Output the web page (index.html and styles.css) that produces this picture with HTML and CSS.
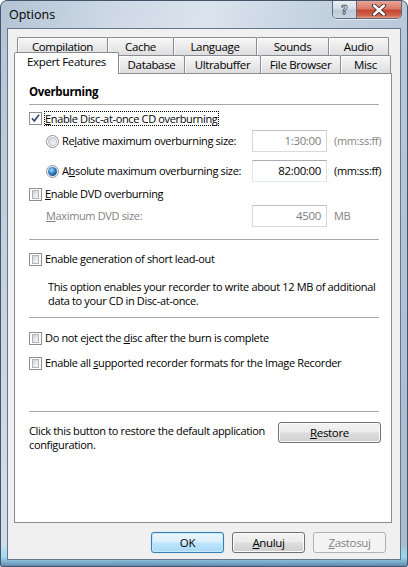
FILE: index.html
```html
<!DOCTYPE html>
<html>
<head>
<meta charset="utf-8">
<title>Options</title>
<link rel="stylesheet" href="styles.css">
</head>
<body>
<div class="window">
  <div class="titlebar">
    <span class="title">Options</span>
    <div class="caption-btns">
      <div class="cbtn help"><span class="qmark">?</span></div>
      <div class="cbtn close">
        <svg width="16" height="12" viewBox="0 0 16 12"><path d="M3 1.5 L13 10.5 M13 1.5 L3 10.5" stroke="#3b2a28" stroke-width="4.2" stroke-linecap="round"/><path d="M3 1.5 L13 10.5 M13 1.5 L3 10.5" stroke="#ffffff" stroke-width="2.4" stroke-linecap="round"/></svg>
      </div>
    </div>
  </div>
  <div class="client">
    <div class="tabs">
      <div class="tabrow row1">
        <div class="tab w-comp">Compilation</div>
        <div class="tab w-cache">Cache</div>
        <div class="tab w-lang">Language</div>
        <div class="tab w-sounds">Sounds</div>
        <div class="tab w-audio">Audio</div>
      </div>
      <div class="tabrow row2">
        <div class="tab sel w-expert">Expert Features</div>
        <div class="tab w-db">Database</div>
        <div class="tab w-ultra">Ultrabuffer</div>
        <div class="tab w-fb">File Browser</div>
        <div class="tab w-misc">Misc</div>
      </div>
    </div>
    <div class="panel">
      <div class="heading">Overburning</div>
      <div class="sep s1"></div>

      <div class="row chk r-cd">
        <span class="cb checked"><svg width="11" height="11" viewBox="0 0 11 11"><path d="M2 5.2 L4.3 8 L9 1.8" stroke="#34496f" stroke-width="1.7" fill="none" stroke-linejoin="round"/></svg></span>
        <span class="focus"><u>E</u>nable Disc-at-once CD overburning</span>
      </div>

      <div class="field r-rel">
        <div class="lbl"><span class="rb"></span><span class="txt">Re<u>l</u>ative maximum overburning size:</span></div>
        <div class="box dis">1:30:00</div>
        <span class="unit grey">(mm:ss:ff)</span>
      </div>

      <div class="field r-abs">
        <div class="lbl"><span class="rb on"></span><span class="txt">A<u>b</u>solute maximum overburning size:</span></div>
        <div class="box">82:00:00</div>
        <span class="unit">(mm:ss:ff)</span>
      </div>

      <div class="row chk r-dvd">
        <span class="cb"></span>
        <span class="txt"><u>E</u>nable DVD overburning</span>
      </div>

      <div class="field r-max">
        <div class="lbl grey"><span class="txt"><u>M</u>aximum DVD size:</span></div>
        <div class="box dis">4500</div>
        <span class="unit grey">MB</span>
      </div>

      <div class="sep s2"></div>

      <div class="row chk r-lead">
        <span class="cb"></span>
        <span class="txt">Enable generation of short lead-out</span>
      </div>

      <p class="para">This option enables your recorder to write about 12&nbsp;MB of additional<br>data to your CD in Disc-at-once.</p>

      <div class="sep s3"></div>

      <div class="row chk r-eject">
        <span class="cb"></span>
        <span class="txt">Do not eject the <u>d</u>isc after the burn is complete</span>
      </div>

      <div class="row chk r-all">
        <span class="cb"></span>
        <span class="txt">Enable all <u>s</u>upported recorder formats for the Image Recorder</span>
      </div>

      <div class="sep s4"></div>

      <div class="restore-row">
        <p class="restore-text">Click this button to restore the default application<br>configuration.</p>
        <div class="btn restore"><u>R</u>estore</div>
      </div>
    </div>
    <div class="buttons">
      <div class="btn default">OK</div>
      <div class="btn"><u>A</u>nuluj</div>
      <div class="btn disabled"><u>Z</u>astosuj</div>
    </div>
  </div>
</div>
</body>
</html>
```
FILE: styles.css
```css
* { box-sizing: border-box; }
html, body { margin: 0; padding: 0; }
body {
  width: 408px;
  height: 567px;
  overflow: hidden;
  background: #ffffff;
  font-family: "Open Sans", "Noto Sans", sans-serif;
  font-size: 11px;
  letter-spacing: -0.35px;
  color: #000;
}
u { text-decoration: underline; text-underline-offset: 1px; }

.window {
  width: 408px;
  height: 567px;
  display: flex;
  flex-direction: column;
  border: 1px solid #44556a;
  border-radius: 7px 7px 2px 2px;
  padding: 0 6px 6px 6px;
  background:
    linear-gradient(180deg, rgba(255,255,255,0) 96%, rgba(150,220,240,0.9) 98.4%, rgba(90,130,170,0.9) 100%),
    linear-gradient(105deg, #b3c3d4 0%, #cfdae6 22%, #dae4ee 38%, #c6d3e1 55%, #b8c8d8 75%, #a9bbcf 100%);
}

/* Title bar */
.titlebar {
  height: 27px;
  margin: 0 -6px;
  padding: 0 5px 0 7px;
  display: flex;
  justify-content: space-between;
  align-items: flex-start;
}
.title {
  margin-top: 6px;
  margin-left: 1px;
  font-size: 12.5px;
  letter-spacing: 0;
  line-height: 16px;
  color: #000;
}
.caption-btns {
  display: flex;
  border: 1px solid #5a6a7c;
  border-top: none;
  border-radius: 0 0 5px 5px;
  overflow: hidden;
  box-shadow: 0 1px 0 rgba(255,255,255,0.6);
}
.cbtn {
  height: 17px;
  display: flex;
  align-items: center;
  justify-content: center;
}
.help {
  width: 24px;
  border-right: 1px solid #5a6a7c;
  background: linear-gradient(180deg, #e8eef4 0%, #d3dde7 48%, #bccad8 52%, #c9d6e2 100%);
}
.qmark {
  font-family: "DejaVu Sans", sans-serif;
  font-weight: bold;
  font-size: 12px;
  line-height: 12px;
  letter-spacing: 0;
  color: #f3f6f9;
  -webkit-text-stroke: 0.8px #4d5b6b;
}
.close {
  width: 44px;
  background: linear-gradient(180deg, #e7a697 0%, #d97a67 45%, #c5452f 55%, #d0644e 85%, #e39c84 100%);
}

/* Client */
.client {
  flex: 1;
  border: 1px solid #64778c;
  background: #f0f0f0;
  padding: 8px 8px 0 6px;
  display: flex;
  flex-direction: column;
}

.tabs { height: 36px; display: flex; flex-direction: column; }
.tabrow { display: flex; height: 18px; align-items: flex-start; }
.row1 { padding-left: 3px; }
.tab {
  height: 18px;
  border: 1px solid #898c95;
  border-bottom: none;
  border-radius: 2px 2px 0 0;
  margin-right: -1px;
  background: linear-gradient(180deg, #f7f7f7 0%, #ececec 45%, #dedede 100%);
  box-shadow: inset 1px 1px 0 #fcfcfc;
  text-align: center;
  font-size: 11.5px;
  line-height: 17px;
  color: #000;
}
.tab.sel {
  height: 22px;
  margin-top: -3px;
  position: relative;
  z-index: 2;
  background: #ffffff;
  box-shadow: none;
  line-height: 18px;
}
.w-comp { width: 91px; }
.w-cache { width: 67px; }
.w-lang { width: 84px; }
.w-sounds { width: 73px; }
.w-audio { width: 61px; }
.w-expert { width: 105px; }
.w-db { width: 67px; }
.w-ultra { width: 77px; }
.w-fb { width: 81px; }
.w-misc { width: 51px; }

.panel {
  flex: 1;
  background: #ffffff;
  border: 1px solid #898c95;
  padding: 10px 10px 0 14px;
  display: flex;
  flex-direction: column;
  position: relative;
  z-index: 1;
  white-space: nowrap;
}

.heading {
  font-weight: bold;
  font-size: 11.5px;
  line-height: 16px;
  height: 16px;
}
.sep { height: 1px; background: #a7a7a7; margin-right: 2px; }
.s1 { margin-top: 4px; }
.s2 { margin-top: 12px; }
.s3 { margin-top: 9px; }
.s4 { margin-top: 40px; }

.row { display: flex; align-items: center; height: 16px; line-height: 16px; }
.r-cd { margin-top: 5px; }
.r-dvd { margin-top: 4px; }
.r-lead { margin-top: 11px; }
.r-eject { margin-top: 12px; }
.r-all { margin-top: 9px; }

.cb {
  flex: none;
  width: 13px;
  height: 13px;
  border: 1px solid #8e8f8f;
  background: #ffffff;
  padding: 2px;
  margin-right: 3px;
  display: flex;
  align-items: center;
  justify-content: center;
}
.cb::before {
  content: "";
  width: 7px;
  height: 7px;
  border: 1px solid #b1b5ba;
  background: linear-gradient(135deg, #cdd1d6 0%, #e6e8eb 50%, #f7f7f7 100%);
}
.cb.checked { padding: 0; }
.cb.checked::before { display: none; }
.cb.checked svg { display: block; }

.focus {
  border: 1px dotted #000;
  padding: 0 1px 0 0;
  line-height: 13px;
  margin-left: -1px;
}
.txt { line-height: 16px; }

.field {
  display: grid;
  grid-template-columns: 216px 75px auto;
  column-gap: 7px;
  align-items: center;
  height: 22px;
}
.r-rel { margin-top: 4px; }
.r-abs { margin-top: 8px; }
.r-max { margin-top: 3px; }
.lbl { display: flex; align-items: center; padding-left: 17px; }

.rb {
  flex: none;
  width: 13px;
  height: 13px;
  border-radius: 50%;
  border: 1px solid #8e8f8f;
  background: #fff;
  margin-right: 3px;
  display: flex;
  align-items: center;
  justify-content: center;
}
.rb::before {
  content: "";
  width: 9px;
  height: 9px;
  border-radius: 50%;
  background: linear-gradient(135deg, #c9cdd2 0%, #e7e9ec 55%, #fafafa 100%);
  box-shadow: inset 0 0 0 1px #c2c6cb;
}
.rb.on::before {
  background: radial-gradient(circle at 40% 35%, #b9e2f8 0%, #3f8fd0 35%, #1a4f8e 75%, #173e6e 100%);
  box-shadow: 0 0 0 1px #d6e4ef;
}

.box {
  height: 22px;
  border: 1px solid #abadb3;
  border-color: #abadb3 #dbdfe6 #e3e9ef #e2e3ea;
  background: #fff;
  text-align: right;
  padding-right: 5px;
  line-height: 20px;
  font-size: 11.5px;
}
.box.dis { border-color: #c3c3c3 #d6d6d6 #d9d9d9 #d6d6d6; color: #7d7d7d; }
.grey { color: #838383; }
.unit { line-height: 16px; }

.para {
  margin: 13px 0 0 0;
  padding-left: 19px;
  line-height: 14px;
}

.restore-row {
  margin-top: 10px;
  display: flex;
  justify-content: space-between;
  align-items: flex-start;
}
.restore-text {
  margin: 2px 0 0 0;
  line-height: 14px;
}

.btn {
  width: 73px;
  height: 21px;
  border: 1px solid #707070;
  border-radius: 3px;
  background: linear-gradient(180deg, #f2f2f2 0%, #ebebeb 48%, #dddddd 52%, #cfcfcf 100%);
  box-shadow: inset 0 0 0 1px #fbfbfb;
  text-align: center;
  line-height: 19px;
  font-size: 11.5px;
  color: #000;
}
.btn.restore { width: 103px; }
.btn.default {
  border-color: #3c7fb1;
  background: linear-gradient(180deg, #eaf6fd 0%, #d9f0fc 48%, #bee6fd 52%, #a7d9f5 100%);
  box-shadow: inset 0 0 0 1px #c4e8fb, 0 0 1px #7ac0ea;
}
.btn.disabled {
  border-color: #adb2b5;
  background: #f4f4f4;
  box-shadow: none;
  color: #838383;
}

.buttons {
  height: 36px;
  padding: 9px 6px 0 0;
  display: flex;
  justify-content: flex-end;
  gap: 8px;
  flex: none;
}
```
